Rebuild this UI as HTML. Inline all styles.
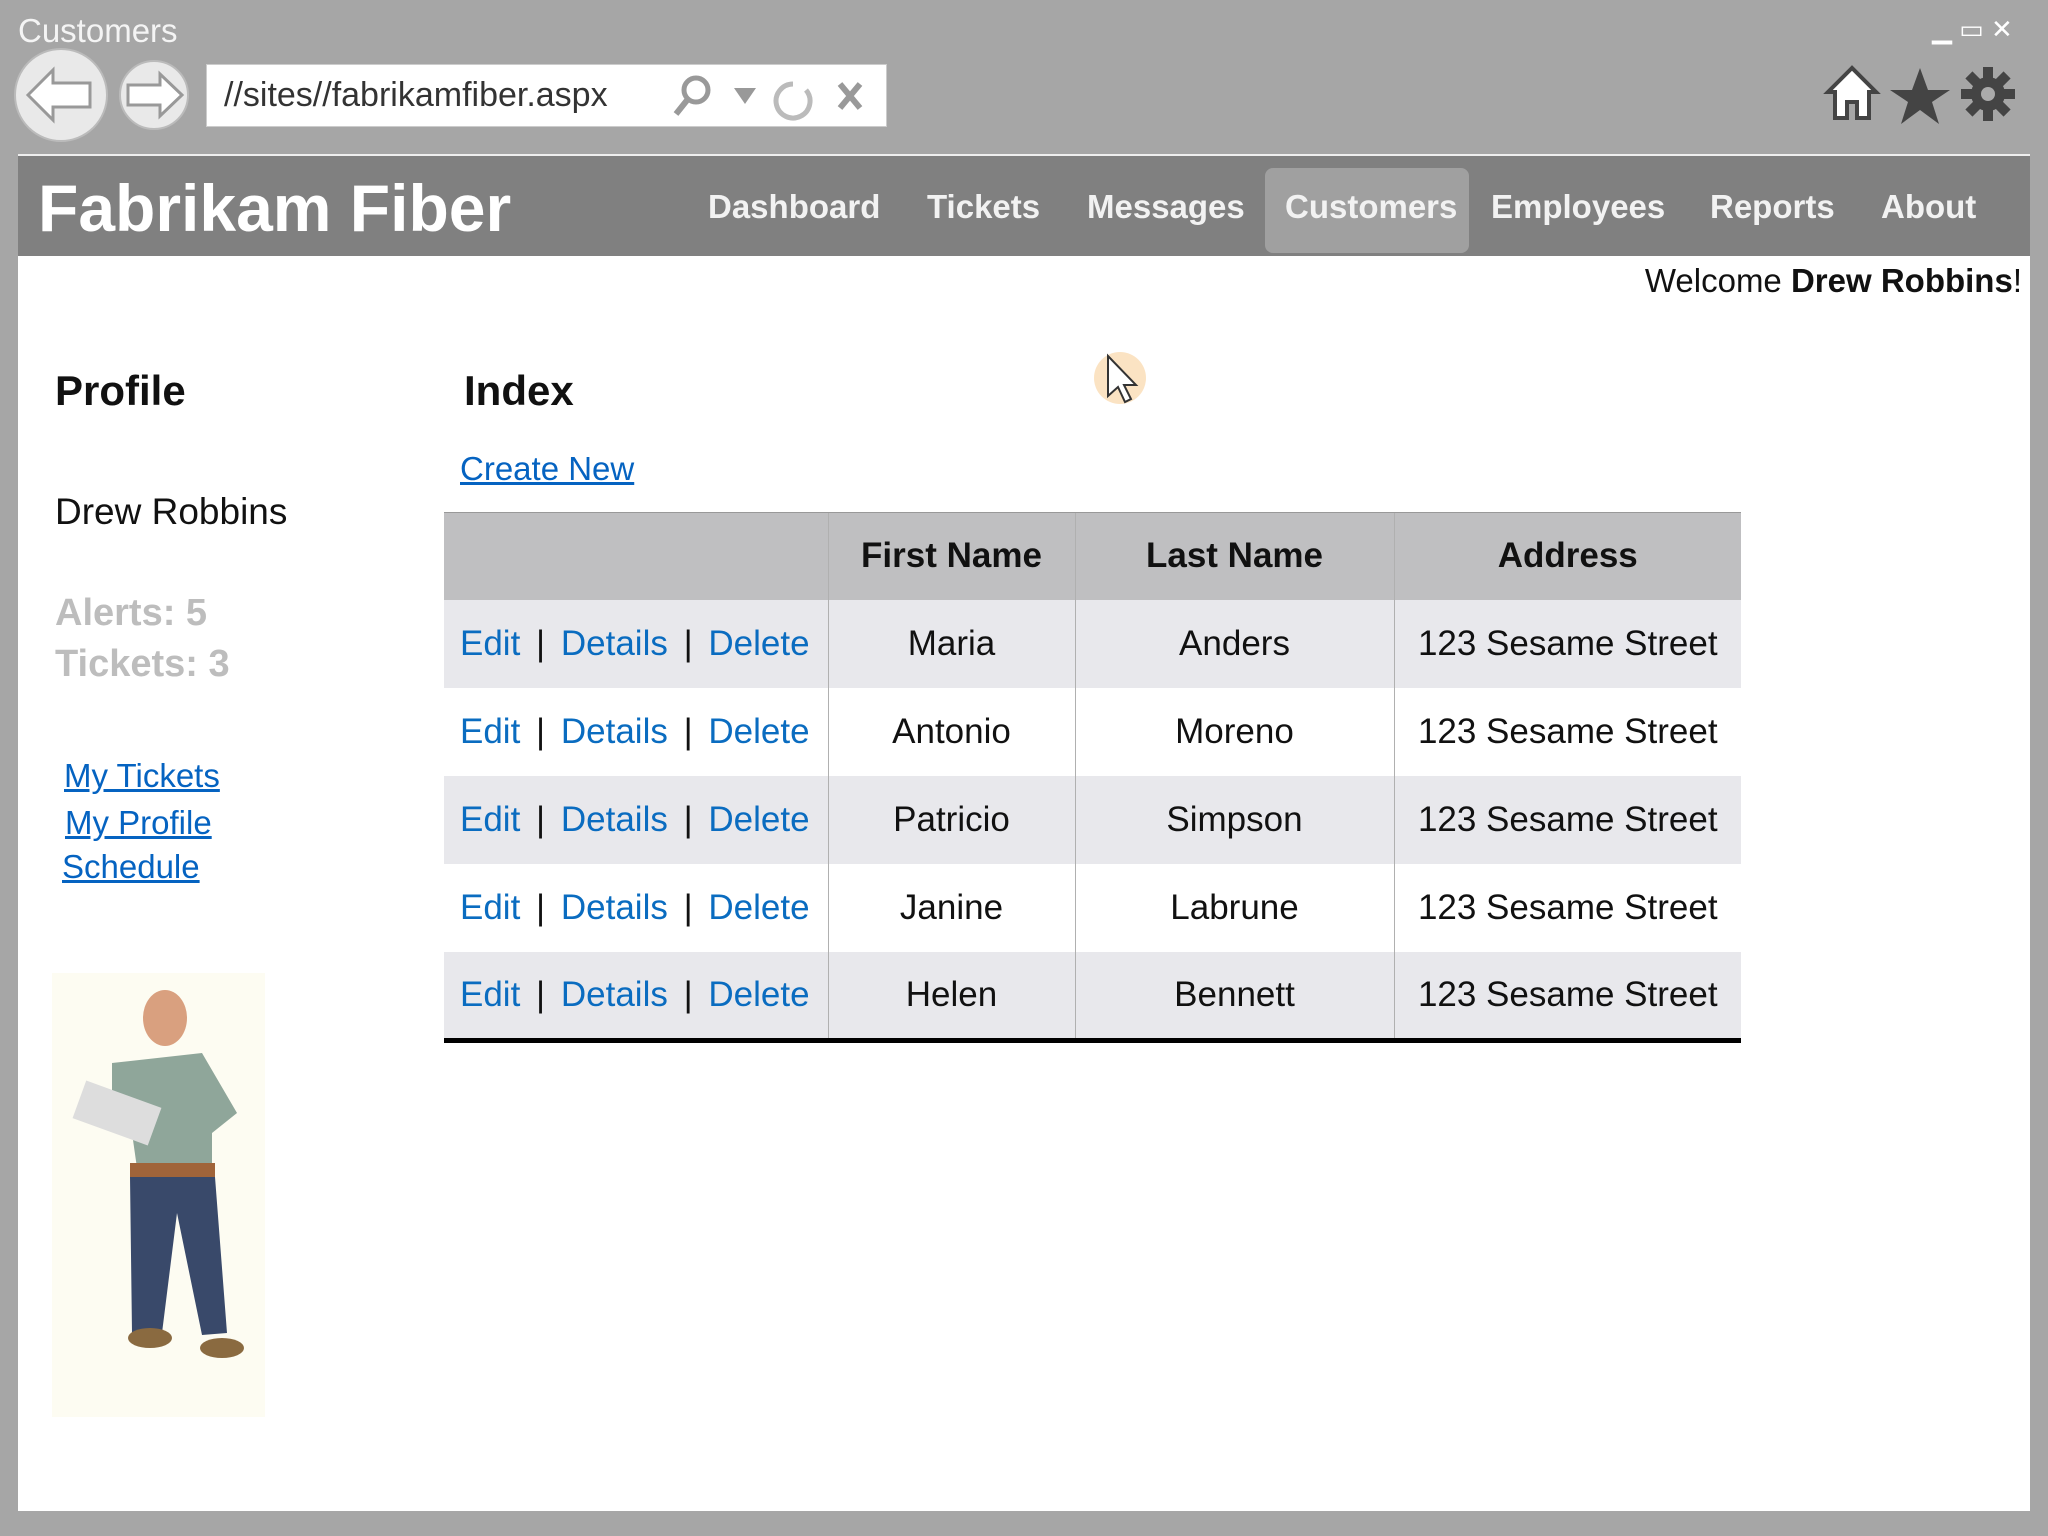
<!DOCTYPE html>
<html><head><meta charset="utf-8"><style>
*{margin:0;padding:0;box-sizing:border-box}
body{width:2048px;height:1536px;background:#a6a6a6;font-family:"Liberation Sans",sans-serif;position:relative;overflow:hidden}
.a{position:absolute;white-space:nowrap}
a{color:#0563c1;text-decoration:underline}
.nav{color:#f2f2f2;font-weight:bold;font-size:33px;top:188px}
table{position:absolute;left:444px;top:512px;width:1297px;border-collapse:collapse;font-size:35px;border-bottom:5px solid #000}
td,th{height:88px;text-align:center;border-left:1px solid #b0b0b0;color:#111}
th{background:#bfbfc1;font-weight:bold}
tr:nth-child(even) td{background:#e8e8ec}
tr:nth-child(odd) td{background:#fff}
td.l{color:#111;text-align:left;padding-left:16px;border-left:none;word-spacing:6px}
td.l a{color:#0a6cc0;text-decoration:none}
</style></head><body>
<div class="a" style="left:18px;top:12px;font-size:33px;color:#f4f4f4">Customers</div>
<div class="a" style="left:1932px;top:14px;font-size:26px;color:#fff">▁ ▭ ✕</div>
<svg class="a" style="left:8px;top:46px" width="190" height="98">
<circle cx="53" cy="49" r="46" fill="#e9e9e9" stroke="#bbb" stroke-width="2"/>
<path d="M20 49 L45 24 L45 37 L82 37 L82 61 L45 61 L45 74 Z" fill="#fff" stroke="#999" stroke-width="3"/>
<circle cx="146" cy="49" r="34" fill="#e9e9e9" stroke="#bbb" stroke-width="2"/>
<path d="M174 49 L152 28 L152 39 L120 39 L120 59 L152 59 L152 70 Z" fill="#fff" stroke="#999" stroke-width="3"/>
</svg>
<div class="a" style="left:206px;top:64px;width:681px;height:63px;background:#fff;border:1px solid #ccc"></div>
<div class="a" style="left:224px;top:76px;font-size:34px;color:#333">//sites//fabrikamfiber.aspx</div>
<svg class="a" style="left:668px;top:70px" width="210" height="52">
<circle cx="28" cy="20" r="12" fill="none" stroke="#999" stroke-width="5"/><line x1="20" y1="29" x2="8" y2="44" stroke="#999" stroke-width="6"/>
<path d="M66 18 L88 18 L77 34 Z" fill="#999"/>
<path d="M125 14 A17 17 0 1 0 138 20" fill="none" stroke="#bbb" stroke-width="5"/>
<path d="M172 14 L192 38 M192 14 L172 38" stroke="#999" stroke-width="6"/>
</svg>
<svg class="a" style="left:1820px;top:62px" width="200" height="64">
<path d="M32 6 L8 30 L15 30 L15 56 L27 56 L27 40 L37 40 L37 56 L49 56 L49 30 L56 30 Z" fill="#fff" stroke="#444" stroke-width="4"/>
<path d="M100 6 L108 28 L130 28 L112 40 L119 62 L100 48 L81 62 L88 40 L70 28 L92 28 Z" fill="#444"/>
<g transform="translate(168,32)"><circle r="17" fill="#444"/><g fill="#444"><rect x="-5" y="-27" width="10" height="54"/><rect x="-27" y="-5" width="54" height="10"/><rect x="-5" y="-27" width="10" height="54" transform="rotate(45)"/><rect x="-5" y="-27" width="10" height="54" transform="rotate(-45)"/></g><circle r="7" fill="#aaa"/></g>
</svg>
<div class="a" style="left:18px;top:154px;width:2012px;height:1357px;background:#fff"></div>
<div class="a" style="left:18px;top:154px;width:2012px;height:102px;background:#808080;border-top:2px solid #eee"></div>
<div class="a" style="left:1265px;top:168px;width:204px;height:85px;background:#a0a0a0;border-radius:8px"></div>
<div class="a" style="left:38px;top:170px;font-size:66px;font-weight:bold;color:#fff">Fabrikam Fiber</div>
<div class="a nav" style="left:708px">Dashboard</div>
<div class="a nav" style="left:927px">Tickets</div>
<div class="a nav" style="left:1087px">Messages</div>
<div class="a nav" style="left:1285px">Customers</div>
<div class="a nav" style="left:1491px">Employees</div>
<div class="a nav" style="left:1710px">Reports</div>
<div class="a nav" style="left:1881px">About</div>
<div class="a" style="right:26px;top:262px;font-size:33px;color:#111">Welcome <b>Drew Robbins</b>!</div>
<div class="a" style="left:55px;top:367px;font-size:42px;font-weight:bold;color:#111">Profile</div>
<div class="a" style="left:464px;top:367px;font-size:42px;font-weight:bold;color:#111">Index</div>
<div class="a" style="left:460px;top:450px;font-size:33px"><a>Create New</a></div>
<div class="a" style="left:55px;top:491px;font-size:37px;color:#111">Drew Robbins</div>
<div class="a" style="left:55px;top:588px;font-size:38px;font-weight:bold;color:#bdbdbd;line-height:51px">Alerts: 5<br>Tickets: 3</div>
<div class="a" style="left:64px;top:757px;font-size:33px"><a>My Tickets</a></div>
<div class="a" style="left:65px;top:804px;font-size:33px"><a>My Profile</a></div>
<div class="a" style="left:62px;top:848px;font-size:33px"><a>Schedule</a></div>
<svg class="a" style="left:52px;top:973px" width="213" height="444">
<rect width="213" height="444" fill="#fdfcf2"/>
<ellipse cx="113" cy="45" rx="22" ry="28" fill="#d9a07f"/>
<path d="M60 90 L150 80 L185 140 L160 160 L160 190 L85 195 L80 160 L60 140 Z" fill="#8fa69a"/>
<rect x="25" y="120" width="80" height="40" fill="#ddd" transform="rotate(20 65 140)"/>
<rect x="78" y="190" width="85" height="14" fill="#a0643a"/>
<path d="M78 204 L163 204 L175 360 L150 362 L125 240 L110 360 L80 360 Z" fill="#39496a"/>
<ellipse cx="98" cy="365" rx="22" ry="10" fill="#8a6a40"/><ellipse cx="170" cy="375" rx="22" ry="10" fill="#8a6a40"/>
</svg>
<svg class="a" style="left:1094px;top:340px" width="60" height="80">
<circle cx="26" cy="38" r="26" fill="#f7c27a" opacity=".45"/>
<path d="M14 16 L14 56 L24 47 L31 62 L37 59 L30 45 L42 45 Z" fill="#fff" stroke="#333" stroke-width="2"/>
</svg>
<table>
<tr><th style="width:384px;border-left:none"></th><th style="width:247px">First Name</th><th style="width:319px">Last Name</th><th>Address</th></tr>
<tr><td class="l"><a>Edit</a> | <a>Details</a> | <a>Delete</a></td><td>Maria</td><td>Anders</td><td>123 Sesame Street</td></tr>
<tr><td class="l"><a>Edit</a> | <a>Details</a> | <a>Delete</a></td><td>Antonio</td><td>Moreno</td><td>123 Sesame Street</td></tr>
<tr><td class="l"><a>Edit</a> | <a>Details</a> | <a>Delete</a></td><td>Patricio</td><td>Simpson</td><td>123 Sesame Street</td></tr>
<tr><td class="l"><a>Edit</a> | <a>Details</a> | <a>Delete</a></td><td>Janine</td><td>Labrune</td><td>123 Sesame Street</td></tr>
<tr><td class="l"><a>Edit</a> | <a>Details</a> | <a>Delete</a></td><td>Helen</td><td>Bennett</td><td>123 Sesame Street</td></tr>
</table>
<div class="a" style="left:444px;top:512px;width:1297px;height:1px;background:#999"></div>
</body></html>
